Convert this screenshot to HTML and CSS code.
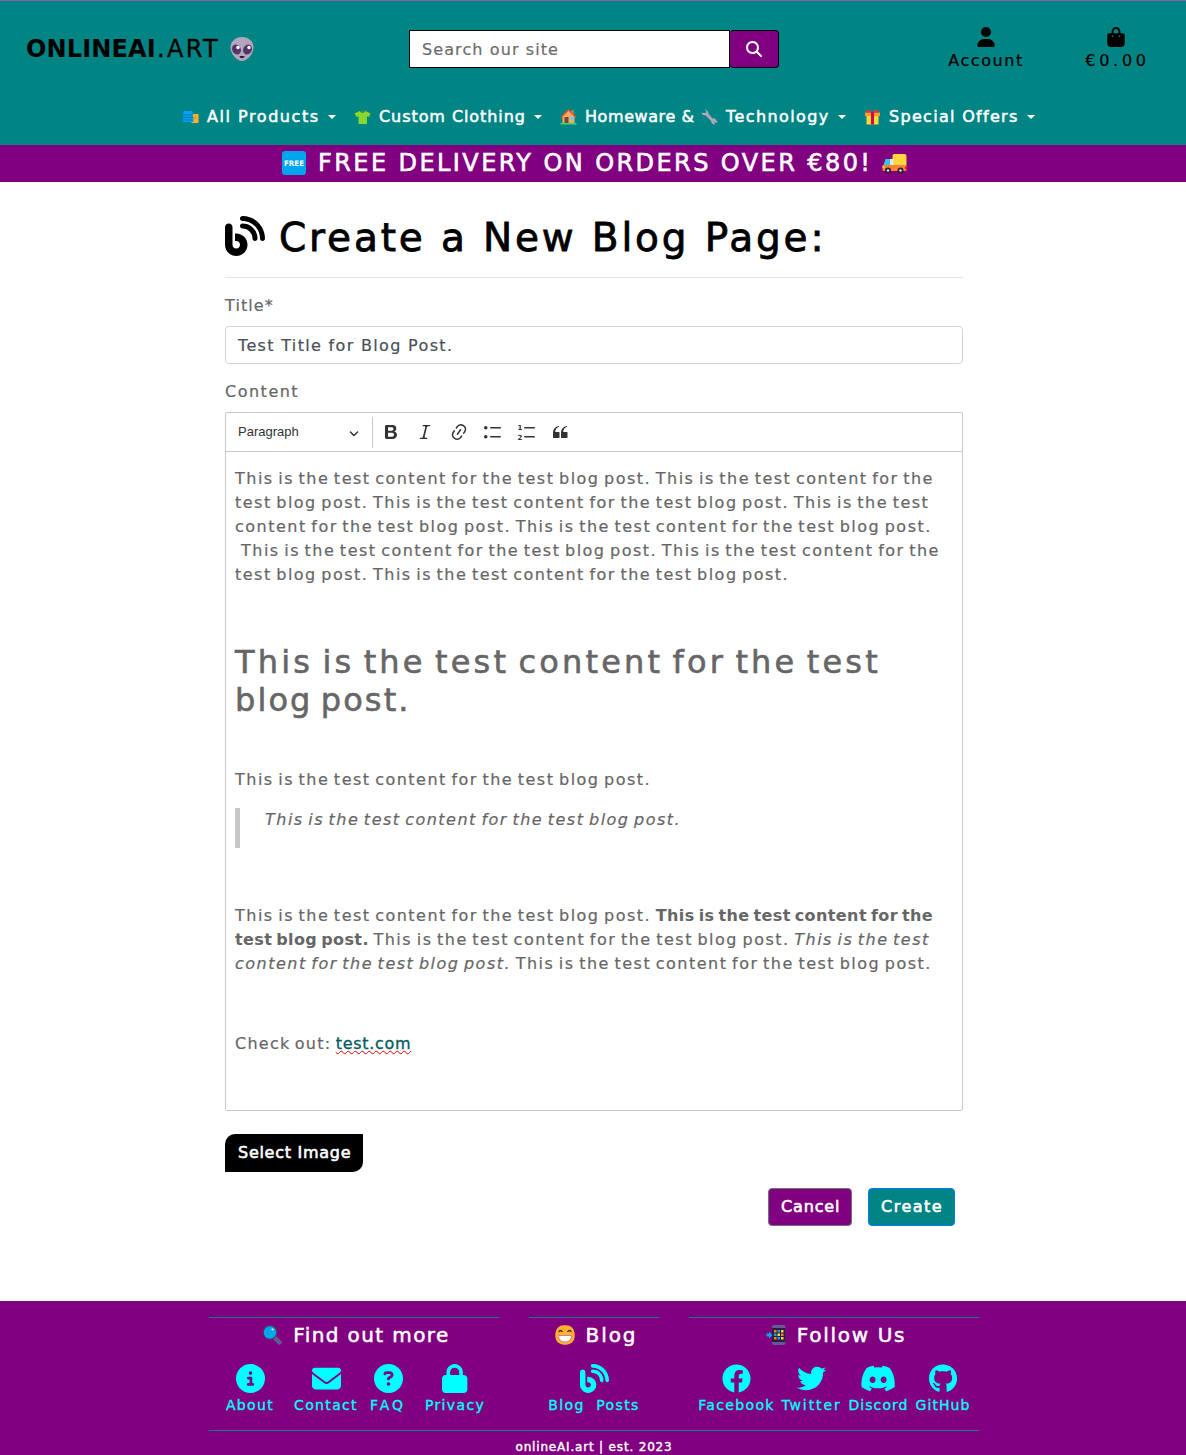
FILE: index.html
```html
<!DOCTYPE html>
<html lang="en">
<head>
<meta charset="utf-8">
<title>Create a New Blog Page - onlineAI.art</title>
<link rel="stylesheet" href="styles.css">
</head>
<body>
<header class="header">
  <div class="topbar">
    <a class="logo"><span class="logo-name">ONLINEAI</span><span class="logo-tld">.ART</span>
      <svg class="logo-alien" viewBox="0 0 24 24"><path fill="#b4a6bd" d="M12 0C5.500 0 .500 4.500.500 10.500.500 17 7 24 12 24s11.500-7 11.500-13.500C23.500 4.500 18.500 0 12 0z"/><ellipse cx="6.500" cy="12.500" rx="4.300" ry="5.200" fill="#533566" transform="rotate(-25 6.500 12.500)"/><ellipse cx="17.500" cy="12.500" rx="4.300" ry="5.200" fill="#533566" transform="rotate(25 17.500 12.500)"/><circle cx="8" cy="10.500" r="1.700" fill="#fff"/><circle cx="19" cy="10.500" r="1.700" fill="#fff"/><path d="M9.500 19h5c0 3-5 3-5 0z" fill="#321b41"/></svg>
    </a>
    <form class="search">
      <div class="search-input">Search our site</div>
      <div class="search-button"><svg class="search-icon" viewBox="0 0 512 512"><path fill="#fff" d="M416 208c0 45.900-14.900 88.300-40 122.700L502.600 457.400c12.500 12.500 12.500 32.800 0 45.300s-32.800 12.500-45.300 0L330.700 376c-34.400 25.200-76.800 40-122.700 40C93.100 416 0 322.900 0 208S93.100 0 208 0S416 93.100 416 208zM208 352a144 144 0 1 0 0-288 144 144 0 1 0 0 288z"/></svg></div>
    </form>
    <div class="user-links">
      <a class="user-link"><svg class="user-icon" viewBox="0 0 448 512"><path d="M224 256A128 128 0 1 0 224 0a128 128 0 1 0 0 256zm-45.700 48C79.800 304 0 383.800 0 482.300C0 498.700 13.300 512 29.700 512H418.300c16.400 0 29.700-13.300 29.700-29.700C448 383.800 368.200 304 269.700 304H178.300z"/></svg><span class="account-label">Account</span></a>
      <a class="user-link"><svg class="user-icon" viewBox="0 0 448 512"><path d="M160 112c0-35.300 28.700-64 64-64s64 28.700 64 64v48H160V112zm-48 48H48c-26.500 0-48 21.500-48 48V416c0 53 43 96 96 96H352c53 0 96-43 96-96V208c0-26.500-21.500-48-48-48H336V112C336 50.100 285.900 0 224 0S112 50.100 112 112v48zm24 48a24 24 0 1 1 0 48 24 24 0 1 1 0-48zm152 24a24 24 0 1 1 48 0 24 24 0 1 1 -48 0z"/></svg><span class="bag-total">€0.00</span></a>
    </div>
  </div>
  <nav class="nav">
    <a class="nav-link"><svg class="emoji" viewBox="0 0 16 16"><path d="M3.500 4V2q2-2 4 0v2" fill="none" stroke="#0067b8"/><path d="M9 5h7v8q0 1-1 1H9z" fill="#ffb02e"/><path d="M11 8q1.500 3 3 0" fill="none" stroke="#f3701b"/><path d="M1 2h9l1 11H0z" fill="#00a6ed"/><path d="M.500 6h10M.300 8.500h10.400M.200 11h10.600" stroke="#0074ba"/></svg><span class="nav-products">All Products</span><i class="caret"></i></a>
    <a class="nav-link"><svg class="emoji" viewBox="0 0 16 16"><path d="M5 2 0 4.500 2 8l2-.800V15h8.500V7.200l2 .800L16 4.500 11 2 8 3z" fill="#86d72f"/><path d="M5 2q3 4 6 0z" fill="#44911b"/></svg><span class="nav-clothing">Custom Clothing</span><i class="caret"></i></a>
    <a class="nav-link"><svg class="emoji" viewBox="0 0 16 16"><path d="M11 1h2v5h-2z" fill="#d3883e"/><path d="M2 7 8 1l6 6v8H2z" fill="#f3ad61"/><path d="m0 8 8-8 8 8-1 1-7-7-7 7z" fill="#f8502f"/><path d="M4 8h4v7H4z" fill="#7d4533"/><path d="M9.500 7.500h3.500V11H9.500z" fill="#73c7ff"/><path d="M0 14h16v1.500H0z" fill="#44d27d"/></svg><span class="nav-homeware">Homeware &amp;</span><svg class="emoji emoji-wrench" viewBox="0 0 16 16"><path d="m4.500 4.500 8 8.500" stroke="#b4a6bd" stroke-width="3" fill="none"/><path d="M3 0 5 2 4 4 1 4 0 3Q0 7 5 6.500L7 5Q7 1 3 0zM10 10l3-1 3 4-1 1-2-1 0 3-3-2z" fill="#b4a6bd"/></svg><span class="nav-technology">Technology</span><i class="caret"></i></a>
    <a class="nav-link"><svg class="emoji" viewBox="0 0 16 16"><path d="M2 6h12v9.500H2z" fill="#fcd53f"/><path d="M.500 3.500h15V7H.500z" fill="#ff9a2d"/><path d="M2 3.500V2q2-3 6 1.500Q12-1 14 2v1.500z" fill="#f8312f"/><path d="M6.500 3h3v12.500h-3z" fill="#ca0b4a"/></svg><span class="nav-offers">Special Offers</span><i class="caret"></i></a>
  </nav>
</header>
<div class="banner">
  <svg class="banner-emoji" viewBox="0 0 24 24"><rect width="24" height="24" rx="3" fill="#00a6ed"/><text class="badge-text" x="2" y="14.800" textLength="20" lengthAdjust="spacingAndGlyphs">FREE</text></svg>
  <span class="banner-text">FREE DELIVERY ON ORDERS OVER €80!</span>
  <svg class="banner-emoji banner-truck" viewBox="0 0 24 24"><path d="M10 4q0-2 2-2h10q2 0 2 2v9H10z" fill="#fcd53f"/><path d="M7 7h4v7H7z" fill="#e6e6e6"/><path d="M0 13h24v5q0 1-1 1H1q-1 0-1-1z" fill="#ff822d"/><path d="M3 7h4v6H1z" fill="#26c9fc"/><path d="M0 14h2v2H0z" fill="#fcd53f"/><path d="M22.500 15H24v2h-1.500z" fill="#ca0b4a"/><circle cx="5.500" cy="18.500" r="3" fill="#321b41"/><circle cx="18" cy="18.500" r="3" fill="#321b41"/><circle cx="5.500" cy="18.500" r="1.200" fill="#e6e6e6"/><circle cx="18" cy="18.500" r="1.200" fill="#e6e6e6"/></svg>
</div>
<main class="main">
  <h1 class="page-title"><svg class="title-icon" viewBox="0 0 512 512"><path d="M192 32c0 17.700 14.300 32 32 32c123.700 0 224 100.300 224 224c0 17.700 14.300 32 32 32s32-14.300 32-32C512 128.900 383.100 0 224 0c-17.700 0-32 14.300-32 32zm0 96c0 17.700 14.300 32 32 32c70.700 0 128 57.300 128 128c0 17.700 14.300 32 32 32s32-14.300 32-32c0-106-86-192-192-192c-17.700 0-32 14.300-32 32zM96 144c0-26.500-21.500-48-48-48S0 117.500 0 144V368c0 79.500 64.500 144 144 144s144-64.500 144-144s-64.500-144-144-144H128v96h16c26.500 0 48 21.500 48 48s-21.500 48-48 48s-48-21.500-48-48V144z"/></svg><span>Create a New Blog Page:</span></h1>
  <div class="label label-title">Title*</div>
  <div class="title-input">Test Title for Blog Post.</div>
  <div class="label label-content">Content</div>
  <div class="editor">
    <div class="toolbar">
      <div class="format-select"><span>Paragraph</span><svg class="chevron" viewBox="0 0 10 10"><path d="M.941 4.523a.75.75 0 1 1 1.060-1.060l3.006 3.005 3.005-3.005a.75.75 0 1 1 1.060 1.060l-3.549 3.550a.75.75 0 0 1-1.168-.136L.941 4.523z"/></svg></div>
      <i class="separator"></i>
      <svg class="tool" viewBox="0 0 20 20"><path d="M10.187 17H5.773c-.637 0-1.092-.138-1.364-.415-.273-.277-.409-.718-.409-1.323V4.738c0-.617.14-1.062.419-1.332.279-.27.73-.406 1.354-.406h4.680c.69 0 1.288.041 1.793.124.506.083.96.242 1.360.478.341.197.644.447.906.75a3.262 3.262 0 0 1 .808 2.162c0 1.401-.722 2.426-2.167 3.075C15.050 10.175 16 11.315 16 13.010a3.756 3.756 0 0 1-2.296 3.504 6.100 6.100 0 0 1-1.517.377c-.571.073-1.238.11-2 .11zm-.217-6.217H7v4.087h3.069c1.977 0 2.965-.69 2.965-2.072 0-.707-.256-1.220-.768-1.537-.512-.319-1.277-.478-2.296-.478zM7 5.130v3.619h2.606c.729 0 1.292-.067 1.690-.2a1.600 1.600 0 0 0 .91-.765c.165-.267.247-.566.247-.897 0-.707-.26-1.176-.778-1.409-.519-.232-1.310-.348-2.375-.348H7z"/></svg>
      <svg class="tool" viewBox="0 0 20 20"><path d="m9.586 14.633.021.004c-.036.335.095.655.393.962.082.083.173.15.274.201h1.474a.6.6 0 1 1 0 1.200H5.304a.6.6 0 0 1 0-1.200h1.150c.474-.07.809-.182 1.005-.334.157-.122.291-.32.404-.597l2.416-9.550a1.053 1.053 0 0 0-.281-.823 1.120 1.120 0 0 0-.442-.296H8.150a.6.6 0 0 1 0-1.200h6.443a.6.6 0 1 1 0 1.200h-1.195c-.376.056-.65.155-.823.296-.215.175-.423.439-.623.79l-2.366 9.347z"/></svg>
      <svg class="tool" viewBox="0 0 20 20"><path d="m11.077 15 .991-1.416a.75.75 0 1 1 1.229.86l-1.148 1.640a.748.748 0 0 1-.217.206 5.251 5.251 0 0 1-8.503-5.955.741.741 0 0 1 .12-.274l1.147-1.639a.75.75 0 1 1 1.228.86L4.933 10.700l.006.003a3.750 3.750 0 0 0 6.132 4.294l.006.004zm5.494-5.335a.748.748 0 0 1-.12.274l-1.147 1.639a.75.75 0 1 1-1.228-.86l.86-1.230a3.750 3.750 0 0 0-6.144-4.301l-.86 1.229a.75.75 0 0 1-1.229-.86l1.148-1.640a.748.748 0 0 1 .217-.206 5.251 5.251 0 0 1 8.503 5.955zm-4.563-2.532a.75.75 0 0 1 .184 1.045l-3.155 4.505a.75.75 0 1 1-1.229-.86l3.155-4.506a.75.75 0 0 1 1.045-.184z"/></svg>
      <svg class="tool" viewBox="0 0 20 20"><path d="M7 5.750c0 .414.336.75.75.75h9.500a.75.75 0 1 0 0-1.500h-9.500a.75.75 0 0 0-.75.75zm-6 0C1 4.784 1.777 4 2.750 4c.966 0 1.750.777 1.750 1.750 0 .966-.777 1.750-1.750 1.750C1.784 7.500 1 6.723 1 5.750zm6 9c0 .414.336.75.75.75h9.500a.75.75 0 1 0 0-1.500h-9.500a.75.75 0 0 0-.75.75zm-6 0c0-.966.777-1.750 1.750-1.750.966 0 1.750.777 1.750 1.750 0 .966-.777 1.750-1.750 1.750-.966 0-1.750-.777-1.750-1.750z"/></svg>
      <svg class="tool" viewBox="0 0 20 20"><path d="M7.750 5h9.500a.75.75 0 1 1 0 1.500h-9.500a.75.75 0 0 1 0-1.500zM7.750 14h9.500a.75.75 0 1 1 0 1.500h-9.500a.75.75 0 0 1 0-1.500z"/><text class="list-digit" x=".500" y="7.500">1</text><text class="list-digit" x=".500" y="17.500">2</text></svg>
      <svg class="tool tool-quote" viewBox="0 0 20 20"><path d="M3 10.423a6.500 6.500 0 0 1 6.056-6.408l.038.67C6.448 5.423 5.354 7.663 5.220 10H9c.552 0 .5.432.5.986v4.511c0 .554-.448.503-1 .503h-5c-.552 0-.5-.449-.5-1.003v-4.574zm8 0a6.500 6.500 0 0 1 6.056-6.408l.038.67c-2.646.739-3.740 2.979-3.873 5.315H17c.552 0 .5.432.5.986v4.511c0 .554-.448.503-1 .503h-5c-.552 0-.5-.449-.5-1.003v-4.574z"/></svg>
    </div>
    <div class="document">
      <p>This is the test content for the test blog post. This is the test content for the<br>test blog post. This is the test content for the test blog post. This is the test<br>content for the test blog post. This is the test content for the test blog post.<br><span class="indented">This is the test content for the test blog post. This is the test content for the</span><br>test blog post. This is the test content for the test blog post.</p>
      <p class="blank"></p>
      <h2>This is the test content for the test<br><span class="heading-end">blog post.</span></h2>
      <p class="blank"></p>
      <p>This is the test content for the test blog post.</p>
      <blockquote><p>This is the test content for the test blog post.</p></blockquote>
      <p class="blank"></p>
      <p>This is the test content for the test blog post. <strong>This is the test content for the<br>test blog post.</strong> This is the test content for the test blog post. <em>This is the test<br>content for the test blog post.</em> This is the test content for the test blog post.</p>
      <p class="blank"></p>
      <p class="check-out">Check out: <a class="link">test.com</a></p>
      <p class="blank"></p>
    </div>
  </div>
  <div class="select-image">Select Image</div>
  <div class="actions"><a class="button button-cancel">Cancel</a><a class="button button-create">Create</a></div>
</main>
<footer class="footer">
  <div class="footer-columns">
    <section class="footer-column">
      <h3 class="footer-heading"><svg class="heading-emoji" viewBox="0 0 20 20"><path d="m12.500 12.500 5 5" stroke="#635994" stroke-width="4.500" stroke-linecap="round"/><circle cx="8" cy="7.500" r="6.800" fill="#00a6ed" stroke="#533566" stroke-width="1.200"/><circle cx="10.500" cy="4.500" r="1" fill="#fff"/></svg><span class="heading-find">Find out more</span></h3>
      <div class="footer-links footer-links-info">
        <a class="footer-link"><svg viewBox="0 0 512 512"><path d="M256 512A256 256 0 1 0 256 0a256 256 0 1 0 0 512zM216 336h24V272H216c-13.300 0-24-10.700-24-24s10.700-24 24-24h48c13.300 0 24 10.700 24 24v88h8c13.300 0 24 10.700 24 24s-10.700 24-24 24H216c-13.300 0-24-10.700-24-24s10.700-24 24-24zm40-208a32 32 0 1 1 0 64 32 32 0 1 1 0-64z"/></svg>About</a>
        <a class="footer-link"><svg viewBox="0 0 512 512"><path d="M48 64C21.500 64 0 85.500 0 112c0 15.100 7.100 29.300 19.200 38.400L236.800 313.600c11.400 8.500 27 8.500 38.400 0L492.800 150.400c12.100-9.100 19.200-23.300 19.200-38.400c0-26.500-21.500-48-48-48H48zM0 176V384c0 35.300 28.700 64 64 64H448c35.300 0 64-28.700 64-64V176L294.400 339.200c-22.800 17.100-54 17.100-76.800 0L0 176z"/></svg>Contact</a>
        <a class="footer-link footer-link-faq"><svg viewBox="0 0 512 512"><path d="M256 512A256 256 0 1 0 256 0a256 256 0 1 0 0 512zM169.800 165.300c7.900-22.300 29.100-37.300 52.800-37.300h58.300c34.900 0 63.100 28.300 63.100 63.100c0 22.600-12.100 43.500-31.700 54.800L280 264.400c-.2 13-10.900 23.600-24 23.600c-13.300 0-24-10.700-24-24V250.500c0-8.600 4.600-16.500 12.100-20.800l44.300-25.400c4.700-2.700 7.600-7.700 7.600-13.100c0-8.400-6.800-15.100-15.100-15.100H222.600c-3.400 0-6.400 2.100-7.500 5.300l-.4 1.200c-4.400 12.500-18.200 19-30.600 14.600s-19-18.200-14.600-30.600l.4-1.200zM224 352a32 32 0 1 1 64 0 32 32 0 1 1 -64 0z"/></svg>FAQ</a>
        <a class="footer-link"><svg viewBox="0 0 448 512"><path d="M144 144v48H304V144c0-44.200-35.800-80-80-80s-80 35.800-80 80zM80 192V144C80 64.500 144.500 0 224 0s144 64.500 144 144v48h16c35.300 0 64 28.700 64 64V448c0 35.300-28.700 64-64 64H64c-35.300 0-64-28.700-64-64V256c0-35.300 28.700-64 64-64H80z"/></svg>Privacy</a>
      </div>
    </section>
    <section class="footer-column">
      <h3 class="footer-heading"><svg class="heading-emoji" viewBox="0 0 20 20"><rect x=".300" y=".300" width="19.400" height="19.400" rx="8.500" fill="#ffb02e"/><path d="M3.500 7q2-3 4 0M12.500 7q2-3 4 0" fill="none" stroke="#402a32" stroke-width="1.300"/><path d="M3.500 10.500h13q0 6.500-6.500 6.500t-6.500-6.500z" fill="#fff" stroke="#d67d9a"/></svg><span class="heading-blog">Blog</span></h3>
      <div class="footer-links footer-links-blog">
        <a class="footer-link"><svg viewBox="0 0 512 512"><path d="M192 32c0 17.700 14.300 32 32 32c123.700 0 224 100.300 224 224c0 17.700 14.300 32 32 32s32-14.300 32-32C512 128.900 383.100 0 224 0c-17.700 0-32 14.300-32 32zm0 96c0 17.700 14.300 32 32 32c70.700 0 128 57.300 128 128c0 17.700 14.300 32 32 32s32-14.300 32-32c0-106-86-192-192-192c-17.700 0-32 14.300-32 32zM96 144c0-26.500-21.500-48-48-48S0 117.500 0 144V368c0 79.500 64.500 144 144 144s144-64.500 144-144s-64.500-144-144-144H128v96h16c26.500 0 48 21.500 48 48s-21.500 48-48 48s-48-21.500-48-48V144z"/></svg>Blog&nbsp; Posts</a>
      </div>
    </section>
    <section class="footer-column">
      <h3 class="footer-heading"><svg class="heading-emoji" viewBox="0 0 20 20"><rect x="6" width="13.500" height="20" rx="2" fill="#635994"/><path d="M6 3h13.500v14H6z" fill="#321b41"/><path d="M.500 8.500H3V6.500l3.500 3.500L3 13.500V11.500H.500z" fill="#00a6ed"/><path d="M8 5h2.500v2.500H8zM15 8.500h2.500V11H15zM8 12h2.500v2.500H8z" fill="#ff822d"/><path d="M11.500 5H14v2.500h-2.500zM8 8.500h2.500V11H8zM11.500 12H14v2.500h-2.500z" fill="#00a6ed"/><path d="M15 5h2.500v2.500H15zM11.500 8.500H14V11h-2.500zM15 12h2.500v2.500H15z" fill="#fcd53f"/></svg><span class="heading-follow">Follow Us</span></h3>
      <div class="footer-links footer-links-social">
        <a class="footer-link"><svg viewBox="0 0 512 512"><path d="M504 256C504 119 393 8 256 8S8 119 8 256c0 123.780 90.690 226.380 209.250 245V327.690h-63V256h63v-54.640c0-62.150 37-96.480 93.670-96.480 27.140 0 55.520 4.840 55.520 4.840v61h-31.280c-30.800 0-40.410 19.120-40.410 38.730V256h68.780l-11 71.690h-57.780V501C413.310 482.380 504 379.780 504 256z"/></svg>Facebook</a>
        <a class="footer-link footer-link-twitter"><svg viewBox="0 0 512 512"><path d="M459.370 151.716c.325 4.548.325 9.097.325 13.645 0 138.720-105.583 298.558-298.558 298.558-59.452 0-114.680-17.219-161.137-47.106 8.447.974 16.568 1.299 25.340 1.299 49.055 0 94.213-16.568 130.274-44.832-46.132-.975-84.792-31.188-98.112-72.772 6.498.974 12.995 1.624 19.818 1.624 9.421 0 18.843-1.300 27.614-3.573-48.081-9.747-84.143-51.980-84.143-102.985v-1.299c13.969 7.797 30.214 12.670 47.431 13.319-28.264-18.843-46.781-51.005-46.781-87.391 0-19.492 5.197-37.360 14.294-52.954 51.655 63.675 129.300 105.258 216.365 109.807-1.624-7.797-2.599-15.918-2.599-24.040 0-57.828 46.782-104.934 104.934-104.934 30.213 0 57.502 12.670 76.670 33.137 23.715-4.548 46.456-13.320 66.599-25.340-7.798 24.366-24.366 44.833-46.132 57.827 21.117-2.273 41.584-8.122 60.426-16.243-14.292 20.791-32.161 39.308-52.628 54.253z"/></svg>Twitter</a>
        <a class="footer-link footer-link-discord"><svg viewBox="0 0 640 512"><path d="M524.531,69.836a1.500,1.500,0,0,0-.764-.7A485.065,485.065,0,0,0,404.081,32.030a1.816,1.816,0,0,0-1.923.91,337.461,337.461,0,0,0-14.900,30.600,447.848,447.848,0,0,0-134.426,0,309.541,309.541,0,0,0-15.135-30.600,1.890,1.890,0,0,0-1.924-.91A483.689,483.689,0,0,0,116.085,69.137a1.712,1.712,0,0,0-.788.676C39.068,183.651,18.186,294.690,28.430,404.354a2.016,2.016,0,0,0,.765,1.375A487.666,487.666,0,0,0,176.020,479.918a1.900,1.900,0,0,0,2.063-.676A348.200,348.200,0,0,0,208.120,430.400a1.860,1.860,0,0,0-1.019-2.588,321.173,321.173,0,0,1-45.868-21.853,1.885,1.885,0,0,1-.185-3.126c3.082-2.309,6.166-4.711,9.109-7.137a1.819,1.819,0,0,1,1.900-.256c96.229,43.917,200.410,43.917,295.500,0a1.812,1.812,0,0,1,1.924.233c2.944,2.426,6.027,4.851,9.132,7.160a1.884,1.884,0,0,1-.162,3.126,301.407,301.407,0,0,1-45.890,21.830,1.875,1.875,0,0,0-1,2.611,391.055,391.055,0,0,0,30.014,48.815,1.864,1.864,0,0,0,2.063.7A486.048,486.048,0,0,0,610.700,405.729a1.882,1.882,0,0,0,.765-1.352C623.729,277.594,590.933,167.465,524.531,69.836ZM222.491,337.580c-28.972,0-52.844-26.587-52.844-59.239S193.056,219.100,222.491,219.100c29.665,0,53.306,26.820,52.843,59.239C275.334,310.993,251.924,337.580,222.491,337.580Zm195.380,0c-28.971,0-52.843-26.587-52.843-59.239S388.437,219.100,417.871,219.100c29.667,0,53.307,26.820,52.844,59.239C470.715,310.993,447.538,337.580,417.871,337.580Z"/></svg>Discord</a>
        <a class="footer-link footer-link-github"><svg viewBox="0 0 496 512"><path d="M244.800 8C106.100 8 0 113.300 0 252c0 110.900 69.800 205.800 169.500 239.200 12.800 2.300 17.300-5.600 17.300-12.100 0-6.200-.3-40.400-.3-61.400 0 0-70 15-84.700-29.800 0 0-11.400-29.100-27.800-36.600 0 0-22.900-15.700 1.600-15.400 0 0 24.900 2 38.600 25.800 21.900 38.600 58.600 27.500 72.900 20.900 2.300-16 8.800-27.100 16-33.700-55.900-6.200-112.300-14.300-112.300-110.500 0-27.500 7.600-41.300 23.600-58.900-2.600-6.500-11.100-33.300 2.600-67.900 20.900-6.500 69 27 69 27 20-5.600 41.500-8.500 62.800-8.500s42.800 2.900 62.800 8.500c0 0 48.100-33.600 69-27 13.700 34.700 5.200 61.400 2.600 67.900 16 17.700 25.800 31.500 25.800 58.900 0 96.500-58.900 104.200-114.800 110.500 9.200 7.900 17 22.900 17 46.400 0 33.700-.3 75.400-.3 83.600 0 6.500 4.600 14.400 17.300 12.100C428.200 457.800 496 362.900 496 252 496 113.300 383.500 8 244.800 8z"/></svg>GitHub</a>
      </div>
    </section>
  </div>
  <div class="copyright">onlineAI.art | est. 2023</div>
</footer>
</body>
</html>
```
FILE: styles.css
```css
* { box-sizing: border-box; }
body {
  margin: 0;
  height: 1455px;
  overflow: hidden;
  background: #fff;
  color: #666;
  font: 16px/24px "DejaVu Sans", sans-serif;
  letter-spacing: 1.1px;
}
svg { display: block; flex: none; }
a, span { white-space: nowrap; }

/* Header */
.header { height: 145px; background: #008484; border-top: 1px solid #8560ad; }
.topbar { display: grid; grid-template-columns: 409px 370px 1fr; height: 96px; }
.logo { display: flex; align-items: center; height: 38px; margin-top: 29px; padding-left: 26px; color: #000; font-size: 24px; }
.logo-name { font-weight: bold; letter-spacing: .15px; width: 131px; }
.logo-tld { letter-spacing: 2.300px; width: 73px; -webkit-text-stroke: .3px #000; }
.logo-alien { width: 24px; height: 24px; }
.search { display: flex; height: 38px; margin: 29px 0 0; }
.search-input { width: 321px; padding: 7px 12px 5px; border: 1px solid #000; background: #fff; color: #6c6c6c; -webkit-text-stroke: .2px #6c6c6c; }
.search-button { display: flex; align-items: center; justify-content: center; flex: 1; border: 1px solid #000; border-left: 0; border-radius: 4px; background: #800080; }
.search-icon { width: 16px; height: 16px; }
.user-links { display: flex; justify-content: flex-end; padding: 26px 5px 0 0; }
.user-link { display: flex; flex-direction: column; align-items: center; width: 130px; color: #000; }
.user-icon { width: 18px; height: 20px; margin-bottom: 2px; }
.account-label { letter-spacing: 1.560px; -webkit-text-stroke: .2px #000; }
.bag-total { letter-spacing: 3.700px; padding-left: 3px; -webkit-text-stroke: .2px #000; }
.nav { display: flex; gap: 18px; padding: 8px 0 0 182px; }
.nav-link { display: flex; align-items: center; color: #fff; -webkit-text-stroke: .5px #fff; }
.emoji { width: 17px; height: 16px; margin-right: 8px; -webkit-text-stroke: 0; }
.emoji-wrench { margin-left: 7px; }
.nav-products { width: 121px; letter-spacing: 1.550px; }
.nav-clothing { width: 155px; letter-spacing: .930px; }
.nav-homeware { width: 109px; letter-spacing: .580px; }
.nav-technology { width: 112px; letter-spacing: 1.400px; }
.nav-offers { width: 138px; letter-spacing: 1.300px; }
.caret { border: 4px solid transparent; border-top-color: #fff; border-bottom: 0; }
.banner { display: flex; align-items: center; height: 37px; padding: 0 0 2px 282px; background: #800080; color: #fff; font-size: 24px; }
.banner-text { width: 564px; margin-left: 12px; letter-spacing: 2.420px; -webkit-text-stroke: .6px #fff; }
.banner-emoji { width: 24px; height: 24px; }
.banner-truck { width: 25px; margin-top: 3px; }
.badge-text { font: bold 7.500px "DejaVu Sans", sans-serif; letter-spacing: 0; fill: #fff; }

/* Blog form */
.main { width: 738px; height: 1119px; margin-left: 225px; padding-top: 31px; }
.page-title { display: flex; align-items: center; gap: 14px; height: 65px; margin: 0; padding-bottom: 15px; border-bottom: 1px solid #e5e5e5; color: #000; font-size: 39px; font-weight: normal; letter-spacing: 2.850px; -webkit-text-stroke: .8px #000; }
.title-icon { width: 40px; height: 40px; margin-bottom: 3px; -webkit-text-stroke: 0; }
.label { height: 24px; -webkit-text-stroke: .2px #666; }
.label-title { margin: 16px 0 8px; }
.label-content { margin: 16px 0 8px; letter-spacing: 1.500px; }
.title-input { height: 38px; padding: 7px 12px 5px; border: 1px solid #ced4da; border-radius: 4px; color: #495057; letter-spacing: 1.330px; -webkit-text-stroke: .2px #495057; }
.editor { height: 699px; border: 1px solid #c9c9cd; border-radius: 2px; }
.toolbar { display: flex; align-items: center; height: 39px; border-bottom: 1px solid #c9c9cd; }
.format-select { display: flex; align-items: center; width: 146px; padding: 0 0 1px 12px; color: #333; font: 13px "Liberation Sans", sans-serif; letter-spacing: 0; }
.chevron { width: 10px; height: 10px; margin: 2px 0 0 50px; fill: #333; }
.separator { width: 1px; height: 31px; margin-right: 8px; background: #c9c9cd; }
.tool { width: 20px; height: 20px; margin-right: 14px; fill: #333; }
.tool-quote { margin-left: -1px; }
.list-digit { font: bold 7px "DejaVu Sans", sans-serif; letter-spacing: 0; }
.document { padding: 15px 9px 0; white-space: nowrap; color: #666; letter-spacing: 1.490px; word-spacing: -2px; -webkit-text-stroke: .2px #666; }
.document p { margin: 0 0 16px; }
.document .blank { height: 24px; }
.document h2 { margin: 0 0 8px; font-size: 32px; font-weight: normal; line-height: 38.400px; letter-spacing: 3.170px; word-spacing: -4px; -webkit-text-stroke: .6px #666; }
.heading-end { letter-spacing: 2.100px; }
.indented { padding-left: 6px; }
.document strong { letter-spacing: .4px; -webkit-text-stroke: 0; }
.document blockquote { margin: 0 0 16px; padding: 0 25px 16px; border-left: 5px solid #c8c8c8; font-style: italic; }
.document blockquote p { margin: 0; }
.document .check-out { letter-spacing: 1.250px; }
.link { color: #005a60; letter-spacing: .700px; text-decoration: underline wavy #e00000 1px; text-underline-offset: 1px; -webkit-text-stroke: .3px #005a60; }
.select-image { width: 138px; height: 38px; margin-top: 23px; padding: 7px 0 7px 13px; border-radius: 10px 0; background: #000; color: #fff; letter-spacing: .720px; white-space: nowrap; -webkit-text-stroke: .6px #fff; }
.actions { display: flex; justify-content: flex-end; gap: 16px; margin: 16px 8px 0 0; }
.button { height: 38px; padding: 6px 0 6px 12px; border: 1px solid; border-radius: 4px; color: #fff; -webkit-text-stroke: .6px #fff; }
.button-cancel { width: 84px; border-color: #6c757d; background: #800080; letter-spacing: .860px; }
.button-create { width: 87px; border-color: #007bff; background: #008484; letter-spacing: 1.500px; }

/* Footer */
.footer { height: 154px; padding: 16px 0 0 209px; background: #800080; }
.footer-columns { display: grid; grid-template-columns: 290px 130px 290px; column-gap: 30px; width: 770px; height: 114px; border-bottom: 1px solid #147a85; }
.footer-column { border-top: 1px solid #147a85; }
.footer-heading { display: flex; align-items: center; justify-content: center; gap: 11px; height: 34px; margin: 0; padding-left: 4px; color: #fff; font-size: 20px; font-weight: normal; -webkit-text-stroke: .5px #fff; }
.heading-emoji { width: 20px; height: 20px; -webkit-text-stroke: 0; }
.heading-find { letter-spacing: 1.400px; }
.heading-blog { letter-spacing: 1.900px; }
.heading-follow { letter-spacing: 1.700px; }
.footer-links { display: grid; margin-top: 12px; }
.footer-links-info { grid-template-columns: 82px 70px 54px 80px; }
.footer-links-social { grid-template-columns: 81px 69px 65px 64px; padding-left: 7px; }
.footer-link { display: flex; flex-direction: column; align-items: center; color: #0ff; font-size: 14px; letter-spacing: 1.350px; -webkit-text-stroke: .3px #0ff; }
.footer-link svg { height: 29px; fill: #0ff; -webkit-text-stroke: 0; }
.footer-link-faq { letter-spacing: 3px; }
.footer-link-twitter { letter-spacing: 1.900px; }
.footer-link-discord, .footer-link-github { letter-spacing: 1.070px; }
.copyright { width: 770px; padding-top: 4px; color: #fff; text-align: center; font-size: 12px; letter-spacing: .820px; -webkit-text-stroke: .4px #fff; }
```
